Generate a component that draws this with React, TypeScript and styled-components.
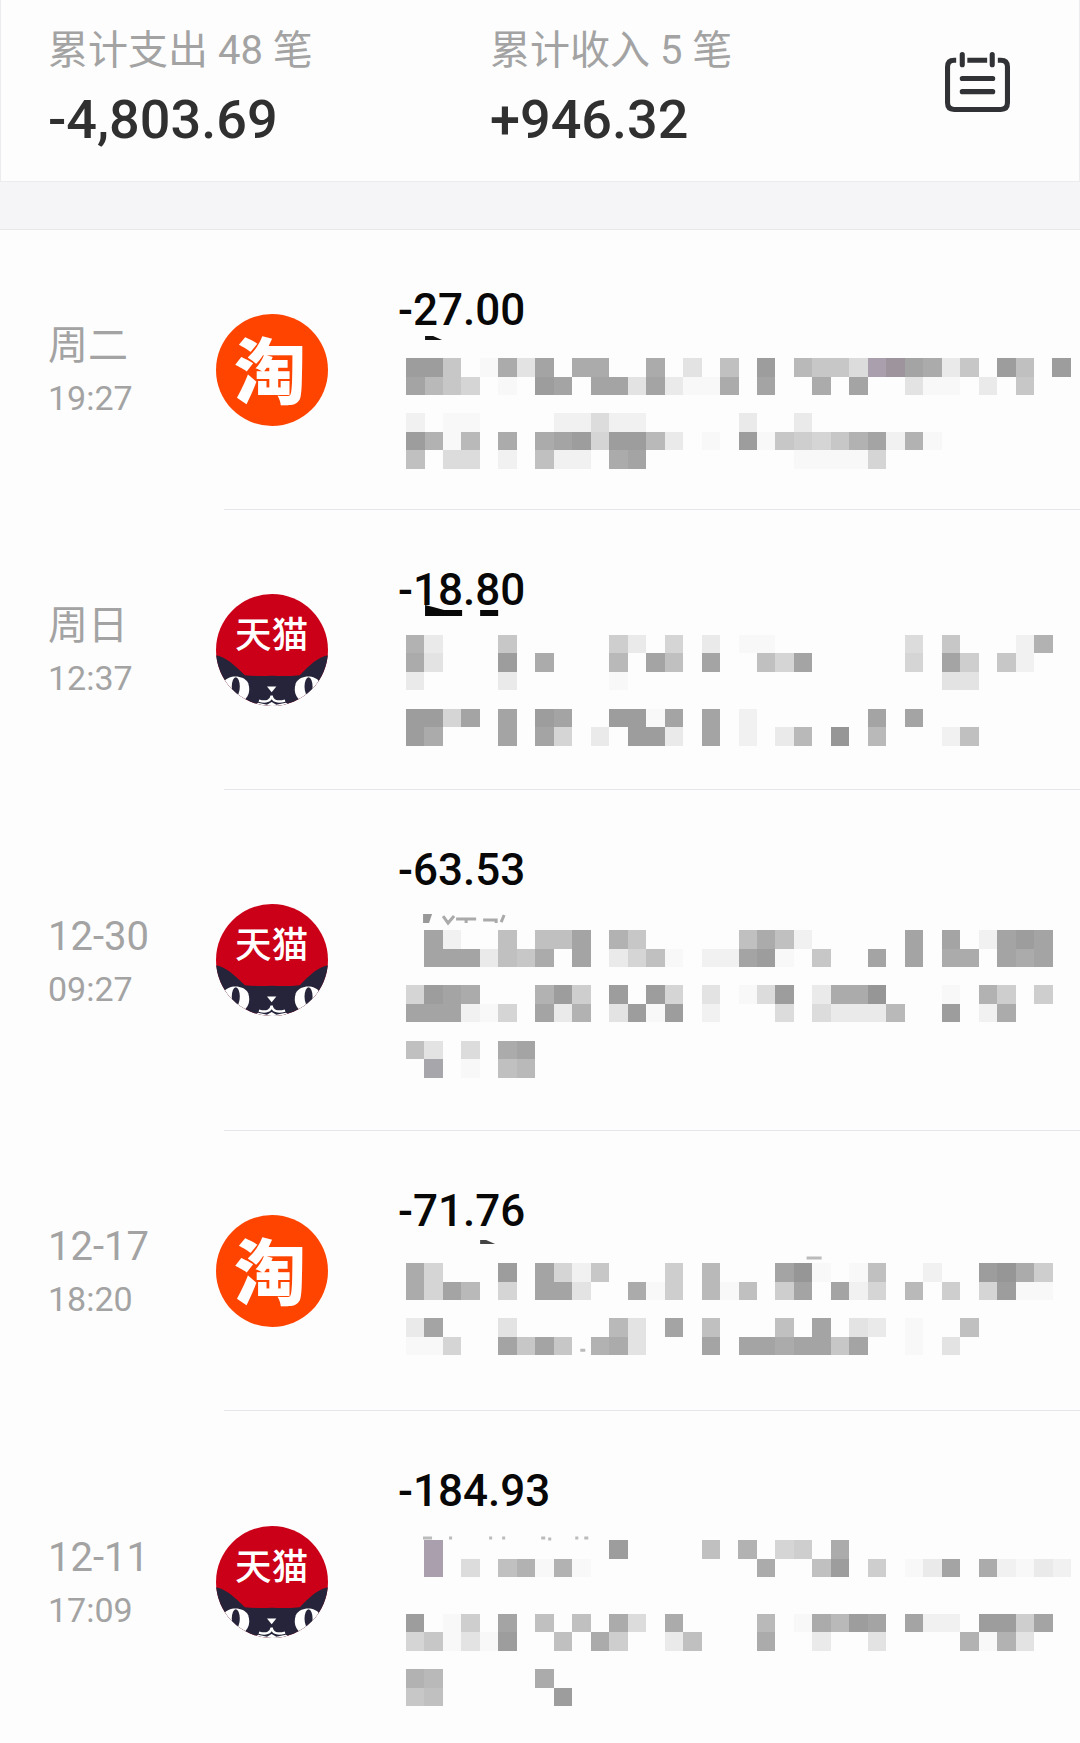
import React from "react";
import styled, { createGlobalStyle } from "styled-components";

const GlobalStyle = createGlobalStyle`
  * { box-sizing: border-box; }
  body { margin: 0; background: #fdfdfd; }
`;

const Screen = styled.main`
  height: 100vh;
  overflow: hidden auto;
  scrollbar-width: none;
  background: #fdfdfd;
  font-family: Roboto, "Noto Sans CJK SC", sans-serif;
`;

const Summary = styled.header`
  display: flex;
  align-items: flex-start;
  height: 182px;
  padding: 27px 69px 0 47px;
  border: 1px solid #ececee;
  border-top: 0;
`;

const Totals = styled.dl`
  flex: 1;
  display: grid;
  grid-template-columns: 442px 1fr;
  margin: 0;
`;

const TotalLabel = styled.dt`
  font-size: 40px;
  line-height: 48px;
  color: #a3a3a3;
`;

const TotalValue = styled.dd`
  margin: 14px 0 0;
  font-size: 54px;
  font-weight: 500;
  line-height: 62px;
  color: #303030;
`;

const StatementButton = styled.button`
  margin: 25px 0 0;
  padding: 0;
  border: 0;
  background: none;
  color: #303236;
  svg { display: block; }
`;

const Band = styled.div`
  height: 48px;
  background: #f5f4f7;
  border-bottom: 1px solid #e8e8ea;
`;

const List = styled.ul`
  margin: 0;
  padding: 0;
  list-style: none;
`;

const Entry = styled.li<{ $tall: boolean }>`
  display: grid;
  grid-template-columns: 176px 1fr;
  align-items: center;
  min-height: ${(p) => (p.$tall ? 341 : 280)}px;
  padding-left: 48px;
`;

const When = styled.time`
  display: flex;
  flex-direction: column;
  gap: 8px;
  color: #a3a3a3;
`;

const Day = styled.span`
  font-size: 40px;
  line-height: 48px;
`;

const Clock = styled.span`
  font-size: 34px;
  line-height: 40px;
`;

const Body = styled.div`
  display: grid;
  grid-template-columns: 174px 1fr;
  align-items: center;
  align-self: stretch;
  padding-right: 9px;
  border-bottom: 1px solid #e7e5e9;
  ${Entry}:last-child & { border-bottom: 0; }
`;

const Logo = styled.svg`
  display: block;
  width: 112px;
  height: 112px;
  margin-left: -8px;
`;

const Detail = styled.div`
  align-self: start;
  padding-top: 55px;
`;

const Amount = styled.div`
  font-size: 44px;
  font-weight: 500;
  line-height: 50px;
  color: #080808;
`;

const MosaicSvg = styled.svg`
  display: block;
  width: calc(100% - 8px);
  margin-left: 8px;
  overflow: visible;
`;

const CELL = 664 / 36;

const TINTS: Record<string, string> = { p: "#a99fad", q: "#9d949e", r: "#a6a6ab" };

/* A hex digit is a grey step, from dark (0) to almost white (e). */
const tint = (c: string) => {
  if (TINTS[c]) return TINTS[c];
  const v = 150 + parseInt(c, 16) * 7;
  return `rgb(${v},${v},${v})`;
};

type Mark = { d: string; color: string; line?: boolean };

function Mosaic({ rows, lead, marks }: { rows: string[]; lead: number; marks: Mark[] }) {
  const height = Math.ceil(lead + rows.length * CELL);
  return (
    <MosaicSvg viewBox={`0 0 664 ${height}`} aria-hidden="true">
      {marks.map((m) => (
        <path
          key={m.d}
          d={m.d}
          fill={m.line ? "none" : m.color}
          stroke={m.line ? m.color : "none"}
          strokeWidth={3}
        />
      ))}
      <g shapeRendering="crispEdges">
        {rows.flatMap((row, y) =>
          row.split("").map((c, x) =>
            c === "." ? null : (
              <rect
                key={`${x}-${y}`}
                x={x * CELL}
                y={lead + y * CELL}
                width={CELL}
                height={CELL}
                fill={tint(c)}
              />
            )
          )
        )}
      </g>
    </MosaicSvg>
  );
}

function TaobaoLogo() {
  return (
    <Logo viewBox="0 0 112 112" role="img" aria-label="淘宝">
      <circle cx="56" cy="56" r="56" fill="#ff4400" />
      <text
        x="54"
        y="84"
        textAnchor="middle"
        fontFamily='"Noto Sans CJK SC", sans-serif'
        fontSize="72"
        fontWeight="900"
        fill="#fff"
      >
        淘
      </text>
    </Logo>
  );
}

function TmallLogo() {
  return (
    <Logo viewBox="48 42 334 334" role="img" aria-label="天猫">
      <defs>
        <clipPath id="tmall-disc">
          <circle cx="215" cy="209" r="167" />
        </clipPath>
      </defs>
      <g clipPath="url(#tmall-disc)">
        <rect x="48" y="42" width="334" height="334" fill="#cb0018" />
        <path
          d="M40 224C74 226 100 252 134 284Q168 288 215 286Q262 288 298 284C330 252 356 226 390 224V380H40Z"
          fill="#25243a"
        />
        <path d="M72 304C82 284 130 280 144 308C154 336 140 362 112 366L60 366Z" fill="#fff" />
        <path d="M356 304C346 284 300 280 286 308C276 336 290 362 318 366L370 366Z" fill="#fff" />
        <ellipse cx="107" cy="318" rx="12" ry="28" fill="#25243a" />
        <ellipse cx="324" cy="318" rx="12" ry="28" fill="#25243a" />
        <path d="M200 318H228L214 335Z" fill="#fff" />
        <path
          d="M214 345C212 362 196 366 176 360M214 345C216 362 232 366 254 360"
          fill="none"
          stroke="#fff"
          strokeWidth="7"
        />
        <path d="M150 380L174 366L200 372L214 364L228 372L256 366L280 380Z" fill="#fff" />
      </g>
      <text
        x="214"
        y="202"
        textAnchor="middle"
        fontFamily='"Noto Sans CJK SC", sans-serif'
        fontSize="109"
        fontWeight="500"
        fill="#fff"
      >
        天猫
      </text>
    </Logo>
  );
}

type Item = {
  day: string;
  clock: string;
  shop: "taobao" | "tmall";
  amount: string;
  tall?: boolean;
  lead: number;
  marks: Mark[];
  rows: string[];
};

const ITEMS: Item[] = [
  {
    day: "周二",
    clock: "19:27",
    shop: "taobao",
    amount: "-27.00",
    lead: 23,
    marks: [{ d: "M19 1h8l9 4H19z", color: "#111" }],
    rows: [
      "117.e3b2.33..3.b.6.1.577apq23c7.16.1",
      "2579.e.12.22b2cee3.2..3.2..bee.c.7..",
      "",
      "d.ee....ddadd.....c..c..............",
      "14e5.3.3219115c.e.1e789742d4e.......",
      "6.aa.d.6dd.32........eeee9..........",
    ],
  },
  {
    day: "周日",
    clock: "12:37",
    shop: "tmall",
    amount: "-18.80",
    lead: 20,
    marks: [{ d: "M19 -10L27 -8L38 -5H56V1H19zM74 -5H92V1H74z", color: "#080808" }],
    rows: [
      "4c...7.....8c.9.c.ee.......a.7...d4.",
      "3b...1.3...5.26.2..692.....9.28.7d..",
      "c....c.....e.................bb.....",
      "",
      "1192.2.12..11e2.2.d......2.2........",
      "13...2.29.c.11c.2.d.c5.0.5...d6.....",
    ],
  },
  {
    day: "12-30",
    clock: "09:27",
    shop: "tmall",
    amount: "-63.53",
    tall: true,
    lead: 35,
    marks: [
      { d: "M17 19h9l-3 9h-6z", color: "#999" },
      { d: "M37 21L42 28L48 21M50 24H70M60 24V28M77 25H90V28M98 20L95 27", color: "#aaa", line: true },
    ],
    rows: [
      ".2d..6.662.47.....636d.....2.2.d212.",
      ".222c673.2.c96e.dd21e.7..2.2.33.232.",
      "",
      "9123...418.1.19.b.ea1.c330...e.48.8.",
      "222de9.2c4.b1e1.d...a.accc5..1.d3...",
      "",
      "6b.a.32.............................",
      ".r.e.65.............................",
    ],
  },
  {
    day: "12-17",
    clock: "18:20",
    shop: "taobao",
    amount: "-71.76",
    lead: 27,
    marks: [
      { d: "M74 4L80 4L89 8H74z", color: "#444" },
      { d: "M400 22H415M174 114h5", color: "#bbb", line: true },
    ],
    rows: [
      "39...1.29d7...8.5...20e.e6..d..1038.",
      "3925.9.22b..3e8.5e6.82.2d9.5.8.91ee.",
      "",
      "c2...b.....5b.2.6...6.2.bc.e..6.....",
      "ee9..2727.43b...2.2232272..e.b......",
    ],
  },
  {
    day: "12-11",
    clock: "17:09",
    shop: "tmall",
    amount: "-184.93",
    tall: true,
    lead: 24,
    marks: [
      {
        d: "M17 22h9M43 22h3M83 22h3M96 22h3M135 22h4M142 23h3M169 22h3M178 22h4",
        color: "#bbb",
        line: true,
      },
    ],
    rows: [
      ".p.........1....6.4.98.3............",
      ".p.a.64e4e.........3..61.8.ec2.3decd",
      "",
      "",
      "1.e8.2.6.6.3a.3....5.e3512.2dd.1182.",
      "97ebe1..6.38..c6...3..c..b....4e4b..",
      "",
      "45.....3............................",
      "76......1...........................",
    ],
  },
];

export default function App() {
  return (
    <Screen>
      <GlobalStyle />
      <Summary>
        <Totals>
          <div>
            <TotalLabel>累计支出 48 笔</TotalLabel>
            <TotalValue>-4,803.69</TotalValue>
          </div>
          <div>
            <TotalLabel>累计收入 5 笔</TotalLabel>
            <TotalValue>+946.32</TotalValue>
          </div>
        </Totals>
        <StatementButton type="button" aria-label="账单">
          <svg width="65" height="60" viewBox="0 0 64 59" fill="none" stroke="currentColor" strokeWidth="5">
            <path d="M11 8H9Q2.5 8 2.5 14.5V50Q2.5 56.5 9 56.5H55Q61.5 56.5 61.5 50V14.5Q61.5 8 55 8H52M22 8H41.5" />
            <path d="M17 2.5V12.5M46.500 2.5V12.5M17 26H47M17 39H47" strokeLinecap="round" />
          </svg>
        </StatementButton>
      </Summary>
      <Band />
      <List>
        {ITEMS.map((it) => (
          <Entry key={it.day} $tall={Boolean(it.tall)}>
            <When>
              <Day>{it.day}</Day>
              <Clock>{it.clock}</Clock>
            </When>
            <Body>
              {it.shop === "taobao" ? <TaobaoLogo /> : <TmallLogo />}
              <Detail>
                <Amount>{it.amount}</Amount>
                <Mosaic rows={it.rows} lead={it.lead} marks={it.marks} />
              </Detail>
            </Body>
          </Entry>
        ))}
      </List>
    </Screen>
  );
}
